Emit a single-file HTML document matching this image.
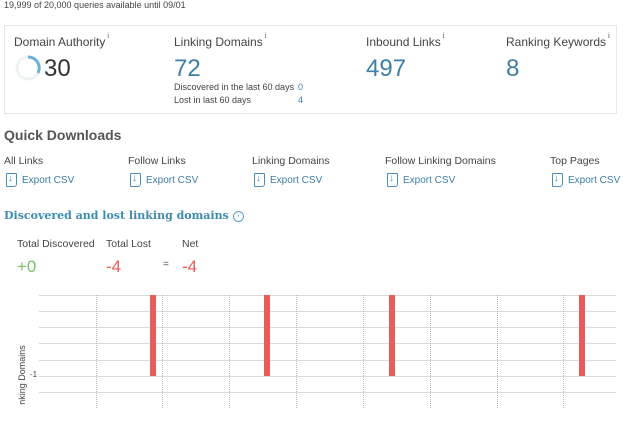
<!DOCTYPE html>
<html><head><meta charset="utf-8"><style>
body{margin:0;width:634px;height:436px;background:#fff;font-family:"Liberation Sans",sans-serif;color:#333;position:relative;overflow:hidden}
.a{position:absolute;white-space:nowrap}
.lbl{font-size:12px;color:#444}
.big{font-size:24px;color:#3d7fa6}
.sup{font-size:7px;vertical-align:top;position:relative;top:-2px;margin-left:2px}
.exp{font-size:10px;color:#3d7fa6}
.ic{position:absolute;width:9px;height:12px;border:1.3px solid #4a90b5;border-radius:1px 1px 3px 1px}
.ic:after{content:"↓";position:absolute;left:1px;top:-1px;font-size:10px;font-weight:bold;color:#4a90b5}
.h{position:absolute;left:39px;width:577px;height:1px;background:#d8dcdc}
.v{position:absolute;top:295px;height:113px;border-left:1px dotted #bbb}
.bar{position:absolute;top:295px;height:81px;width:6px;background:#e85c5c}
</style></head><body>
<div class="a" style="left:4px;top:0;font-size:9px;color:#444">19,999 of 20,000 queries available until 09/01</div>
<div class="a" style="left:4px;top:25px;width:611px;height:87px;border:1px solid #e6e6e6"></div>
<div class="a lbl" style="left:14px;top:35px">Domain Authority<span class="sup">i</span></div>
<svg class="a" style="left:14px;top:54px" width="28" height="28"><circle cx="14" cy="14" r="11" fill="none" stroke="#eef2f4" stroke-width="3"/><path d="M14 3 A11 11 0 0 1 24 19" fill="none" stroke="#6ab2d8" stroke-width="3"/></svg>
<div class="a" style="left:44px;top:55px;font-size:24px;color:#333">30</div>
<div class="a lbl" style="left:174px;top:35px">Linking Domains<span class="sup">i</span></div>
<div class="a big" style="left:174px;top:55px">72</div>
<div class="a" style="left:174px;top:82px;font-size:9px;color:#444">Discovered in the last 60 days</div>
<div class="a" style="left:298px;top:82px;font-size:9px;color:#3d7fa6">0</div>
<div class="a" style="left:174px;top:95px;font-size:9px;color:#444">Lost in last 60 days</div>
<div class="a" style="left:298px;top:95px;font-size:9px;color:#3d7fa6">4</div>
<div class="a lbl" style="left:366px;top:35px">Inbound Links<span class="sup">i</span></div>
<div class="a big" style="left:366px;top:55px">497</div>
<div class="a lbl" style="left:506px;top:35px">Ranking Keywords<span class="sup">i</span></div>
<div class="a big" style="left:506px;top:55px">8</div>
<div class="a" style="left:4px;top:127px;font-size:14px;font-weight:bold;color:#555">Quick Downloads</div>
<div class="a lbl" style="left:4px;top:155px;font-size:10.5px">All Links</div>
<div class="a lbl" style="left:128px;top:155px;font-size:10.5px">Follow Links</div>
<div class="a lbl" style="left:252px;top:155px;font-size:10.5px">Linking Domains</div>
<div class="a lbl" style="left:385px;top:155px;font-size:10.5px">Follow Linking Domains</div>
<div class="a lbl" style="left:550px;top:155px;font-size:10.5px">Top Pages</div>
<div class="ic" style="left:6px;top:173px"></div><div class="a exp" style="left:22px;top:175px">Export CSV</div>
<div class="ic" style="left:130px;top:173px"></div><div class="a exp" style="left:146px;top:175px">Export CSV</div>
<div class="ic" style="left:254px;top:173px"></div><div class="a exp" style="left:270px;top:175px">Export CSV</div>
<div class="ic" style="left:387px;top:173px"></div><div class="a exp" style="left:403px;top:175px">Export CSV</div>
<div class="ic" style="left:552px;top:173px"></div><div class="a exp" style="left:568px;top:175px">Export CSV</div>
<div class="a" style="left:4px;top:209px;font-size:11px;font-weight:bold;color:#3d8cb0;font-family:'DejaVu Serif',serif">Discovered and lost linking domains <span style="display:inline-block;width:9px;height:9px;border:1px solid #5aa0c0;border-radius:50%;font-size:7px;line-height:9px;text-align:center;font-weight:normal;vertical-align:middle">›</span></div>
<div class="a lbl" style="left:17px;top:238px;font-size:10.5px">Total Discovered</div>
<div class="a lbl" style="left:106px;top:238px;font-size:10.5px">Total Lost</div>
<div class="a lbl" style="left:182px;top:238px;font-size:10.5px">Net</div>
<div class="a" style="left:17px;top:257px;font-size:17px;color:#7cc066">+0</div>
<div class="a" style="left:106px;top:257px;font-size:17px;color:#e85c5c">-4</div>
<div class="a" style="left:163px;top:259px;font-size:10px;color:#555">=</div>
<div class="a" style="left:182px;top:257px;font-size:17px;color:#e85c5c">-4</div>
<div class="h" style="top:295px"></div><div class="h" style="top:311px"></div><div class="h" style="top:327px"></div><div class="h" style="top:343px"></div><div class="h" style="top:360px"></div><div class="h" style="top:376px"></div><div class="h" style="top:392px"></div>
<div class="v" style="left:96px"></div><div class="v" style="left:162px"></div><div class="v" style="left:229px"></div><div class="v" style="left:296px"></div><div class="v" style="left:363px"></div><div class="v" style="left:430px"></div><div class="v" style="left:497px"></div><div class="v" style="left:563px"></div>
<div class="bar" style="left:150px"></div><div class="bar" style="left:264px"></div><div class="bar" style="left:389px"></div><div class="bar" style="left:579px"></div>
<div class="a" style="left:30px;top:370px;font-size:8px;color:#444">-1</div>
<div class="a" style="left:-8px;top:370px;font-size:9px;color:#444;transform:rotate(-90deg);transform-origin:center">nking Domains</div>
</body></html>
